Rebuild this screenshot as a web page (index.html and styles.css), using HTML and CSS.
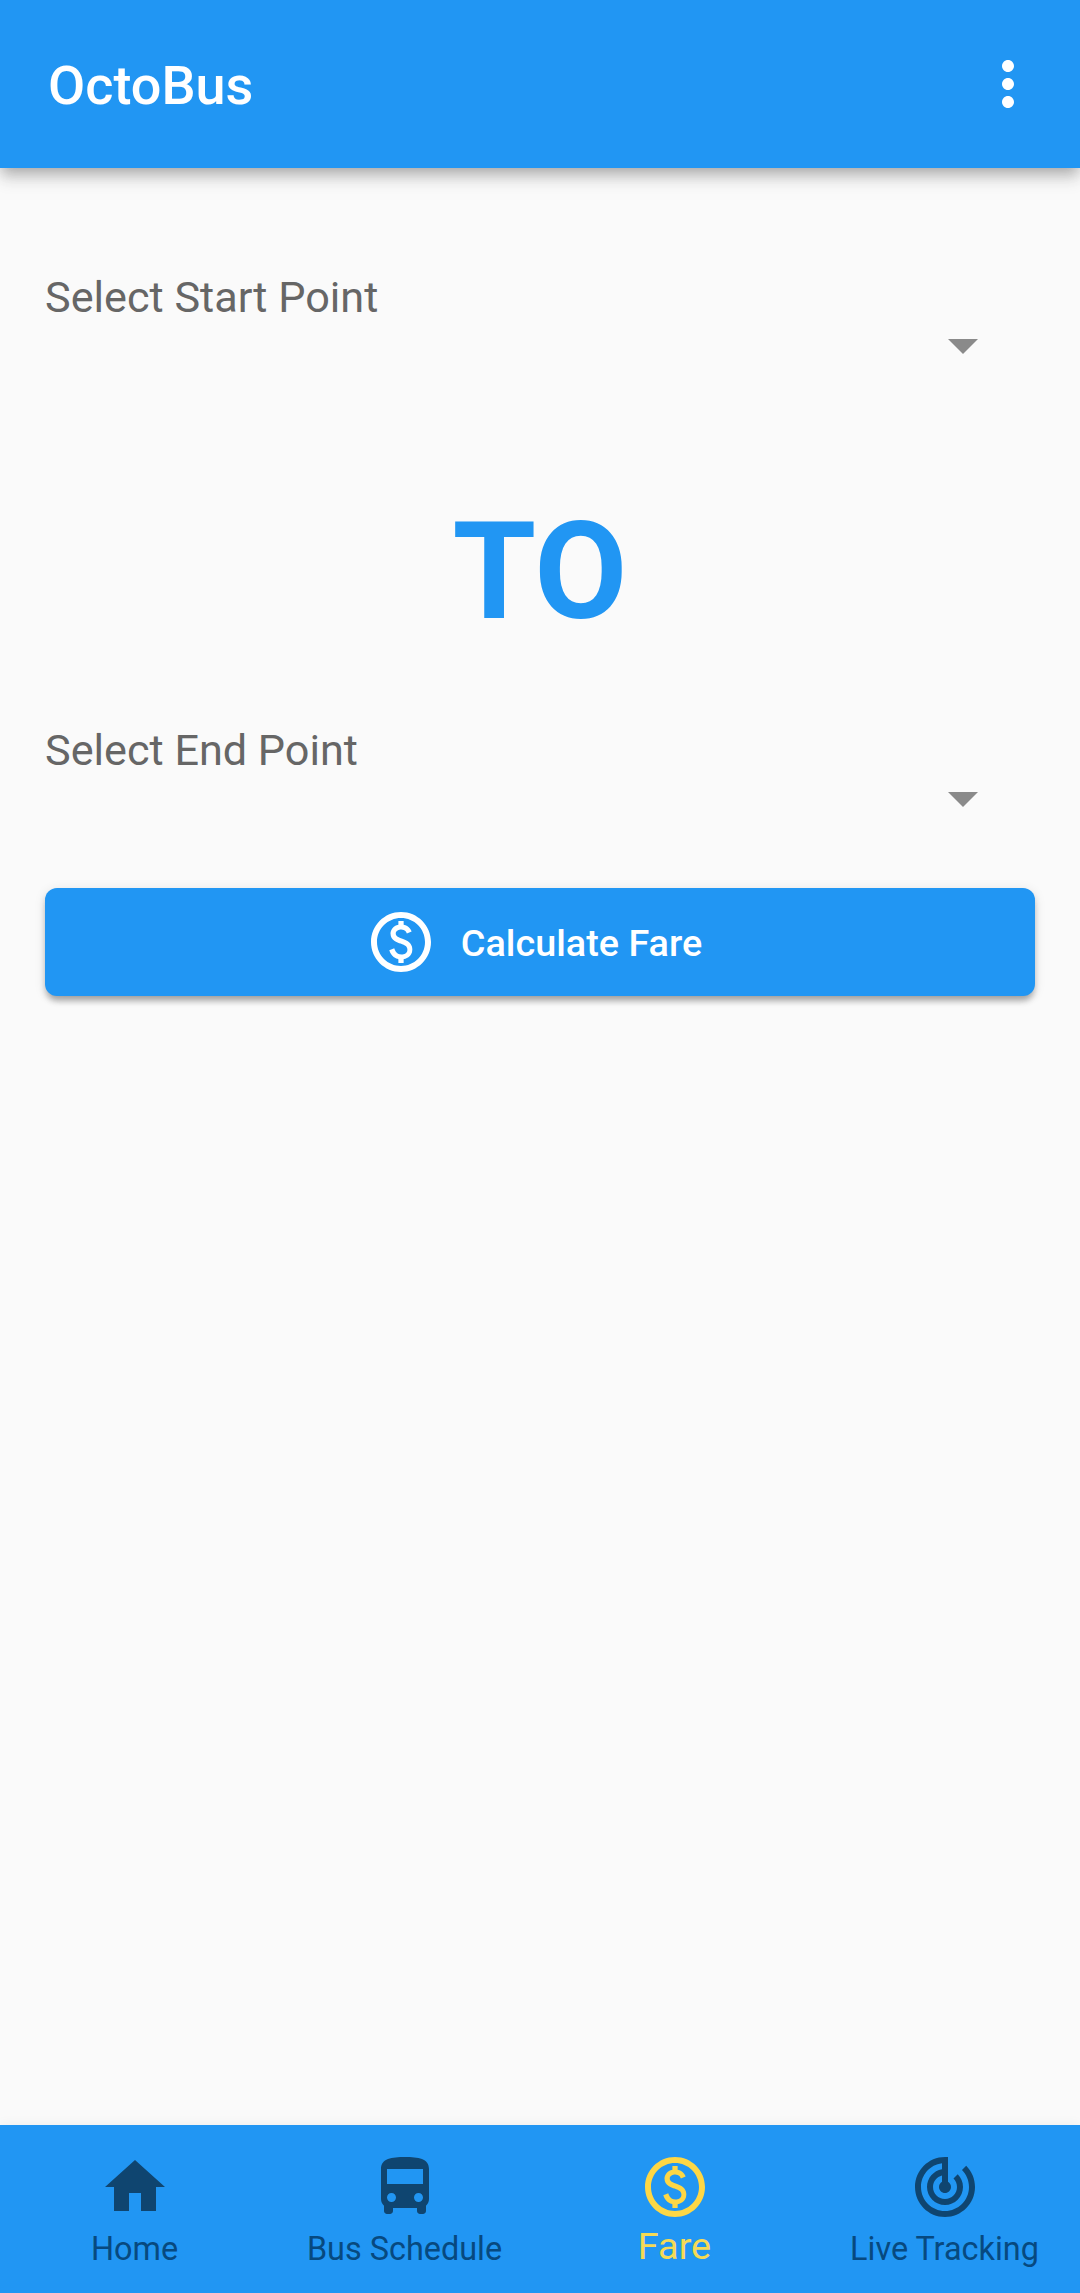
FILE: index.html
```html
<!DOCTYPE html>
<html lang="en">
<head>
  <meta charset="utf-8">
  <title>OctoBus</title>
  <link rel="stylesheet" href="styles.css">
</head>
<body>
  <header class="app-bar">
    <h1 class="app-title">OctoBus</h1>
    <svg class="icon" viewBox="0 0 24 24"><path d="M12 8c1.100 0 2-.9 2-2s-.9-2-2-2-2 .9-2 2 .9 2 2 2zm0 2c-1.100 0-2 .9-2 2s.9 2 2 2 2-.9 2-2-.9-2-2-2zm0 6c-1.100 0-2 .9-2 2s.9 2 2 2 2-.9 2-2-.9-2-2-2z"/></svg>
  </header>

  <main class="content">
    <div class="field">
      <span class="field-label">Select Start Point</span>
      <svg class="field-arrow" viewBox="7 10 10 5"><path d="M7 10l5 5 5-5z"/></svg>
    </div>
    <div class="separator">TO</div>
    <div class="field">
      <span class="field-label">Select End Point</span>
      <svg class="field-arrow" viewBox="7 10 10 5"><path d="M7 10l5 5 5-5z"/></svg>
    </div>
    <button class="fare-button" type="button">
      <svg class="icon" viewBox="0 0 24 24"><path d="M12 2C6.48 2 2 6.48 2 12s4.48 10 10 10 10-4.48 10-10S17.52 2 12 2zm0 18c-4.41 0-8-3.59-8-8s3.59-8 8-8 8 3.59 8 8-3.59 8-8 8z"/><path d="M12.89 11.1c-1.78-.59-2.64-.96-2.64-1.9 0-1.02 1.11-1.39 1.81-1.39 1.31 0 1.79.99 1.9 1.34l1.58-.67c-.15-.44-.82-1.91-2.66-2.23V5h-1.75v1.26c-2.6.56-2.62 2.85-2.62 2.96 0 2.27 2.25 2.91 3.35 3.31 1.58.56 2.28 1.07 2.28 2.03 0 1.13-1.05 1.61-1.98 1.61-1.82 0-2.34-1.87-2.4-2.09l-1.66.67c.63 2.19 2.28 2.78 3.03 2.96V19h1.75v-1.24c.4-.09 2.9-.59 2.9-3.22 0-1.39-.61-2.61-2.89-3.44z"/></svg>
      <span class="fare-button-label">Calculate Fare</span>
    </button>
  </main>

  <nav class="bottom-nav">
    <a class="nav-item">
      <svg class="icon" viewBox="0 0 24 24"><path d="M10 20v-6h4v6h5v-8h3L12 3 2 12h3v8z"/></svg>
      <span class="nav-label">Home</span>
    </a>
    <a class="nav-item">
      <svg class="icon" viewBox="0 0 24 24"><path d="M4 16c0 .88.39 1.67 1 2.22V20c0 .55.45 1 1 1h1c.55 0 1-.45 1-1v-1h8v1c0 .55.45 1 1 1h1c.55 0 1-.45 1-1v-1.78c.61-.55 1-1.34 1-2.22V6c0-3.500-3.580-4-8-4s-8 .5-8 4v10zm3.500 1c-.83 0-1.500-.67-1.500-1.500S6.670 14 7.500 14s1.500.67 1.500 1.500S8.330 17 7.500 17zm9 0c-.83 0-1.500-.67-1.500-1.500s.67-1.500 1.500-1.500 1.500.67 1.500 1.500-.67 1.500-1.500 1.500zm1.500-6H6V6h12v5z"/></svg>
      <span class="nav-label">Bus Schedule</span>
    </a>
    <a class="nav-item nav-item-active">
      <svg class="icon" viewBox="0 0 24 24"><path d="M12 2C6.48 2 2 6.48 2 12s4.48 10 10 10 10-4.48 10-10S17.52 2 12 2zm0 18c-4.41 0-8-3.59-8-8s3.59-8 8-8 8 3.59 8 8-3.59 8-8 8z"/><path d="M12.89 11.1c-1.78-.59-2.64-.96-2.64-1.9 0-1.02 1.11-1.39 1.81-1.39 1.31 0 1.79.99 1.9 1.34l1.58-.67c-.15-.44-.82-1.91-2.66-2.23V5h-1.75v1.26c-2.6.56-2.62 2.85-2.62 2.96 0 2.27 2.25 2.91 3.35 3.31 1.58.56 2.28 1.07 2.28 2.03 0 1.13-1.05 1.61-1.98 1.61-1.82 0-2.34-1.87-2.4-2.09l-1.66.67c.63 2.19 2.28 2.78 3.03 2.96V19h1.75v-1.24c.4-.09 2.9-.59 2.9-3.22 0-1.39-.61-2.61-2.89-3.44z"/></svg>
      <span class="nav-label">Fare</span>
    </a>
    <a class="nav-item">
      <svg class="icon" viewBox="0 0 24 24"><path d="M19.07 4.93l-1.41 1.41C19.1 7.79 20 9.79 20 12c0 4.42-3.58 8-8 8s-8-3.58-8-8c0-4.08 3.05-7.44 7-7.93v2.02C8.16 6.57 6 9.03 6 12c0 3.31 2.69 6 6 6s6-2.69 6-6c0-1.66-.67-3.16-1.76-4.24l-1.41 1.41C15.55 9.9 16 10.9 16 12c0 2.21-1.79 4-4 4s-4-1.79-4-4c0-1.86 1.28-3.41 3-3.86v2.14c-.6.35-1 .98-1 1.72 0 1.1.9 2 2 2s2-.9 2-2c0-.74-.4-1.38-1-1.72V2h-1C6.48 2 2 6.48 2 12s4.48 10 10 10 10-4.48 10-10c0-2.76-1.12-5.26-2.93-7.07z"/></svg>
      <span class="nav-label">Live Tracking</span>
    </a>
  </nav>
</body>
</html>
```
FILE: styles.css
```css
* {
  box-sizing: border-box;
}

body {
  display: flex;
  flex-direction: column;
  height: 2293px;
  margin: 0;
  background: #fafafa;
  font-family: Roboto, sans-serif;
}

.icon {
  flex: none;
  width: 72px;
  height: 72px;
  fill: currentColor;
}

.app-bar {
  display: flex;
  flex: none;
  align-items: center;
  justify-content: space-between;
  height: 168px;
  padding: 0 36px 0 48px;
  background: #2196f3;
  color: #fff;
  box-shadow: 0 6px 12px -3px rgba(0, 0, 0, 0.2), 0 12px 15px rgba(0, 0, 0, 0.12), 0 3px 20px rgba(0, 0, 0, 0.08);
}

.app-title {
  margin: 0;
  padding-top: 3px;
  font-size: 54px;
  font-weight: 500;
  line-height: 64px;
}

.content {
  display: flex;
  flex: 1;
  flex-direction: column;
  padding: 105px 45px 0;
}

.field {
  display: flex;
  flex-direction: column;
  gap: 16px;
  height: 81px;
}

.field-label {
  color: #666;
  font-size: 43.2px;
  line-height: 50px;
}

.field-arrow {
  align-self: flex-end;
  width: 30px;
  height: 15px;
  margin-right: 57px;
  fill: #8a8a8a;
}

.separator {
  margin: 139px 0 75px;
  color: #2196f3;
  font-size: 135px;
  font-weight: 700;
  line-height: 158px;
  text-align: center;
}

.fare-button {
  display: flex;
  align-items: center;
  justify-content: center;
  gap: 24px;
  height: 108px;
  margin-top: 81px;
  padding: 0 49px 0 36px;
  border: 0;
  border-radius: 12px;
  background: #2196f3;
  color: #fff;
  font: 500 37.8px/44px Roboto, sans-serif;
  box-shadow: 0 7px 6px -3px rgba(0, 0, 0, 0.2), 0 5px 6px rgba(0, 0, 0, 0.14), 0 2px 12px rgba(0, 0, 0, 0.1);
}

.fare-button-label {
  padding-top: 2px;
}

.bottom-nav {
  display: grid;
  flex: none;
  grid-template-columns: repeat(4, 1fr);
  height: 168px;
  background: #2196f3;
  box-shadow: 0 0 12px rgba(0, 0, 0, 0.06);
}

.nav-item {
  display: flex;
  flex-direction: column;
  align-items: center;
  padding-top: 26px;
  color: rgba(0, 0, 0, 0.54);
}

.nav-label {
  margin-top: 7px;
  padding-right: 1px;
  color: #07497f;
  font-size: 32.4px;
  line-height: 38px;
  white-space: nowrap;
}

.nav-item-active {
  color: #fdd745;
}

.nav-item-active .nav-label {
  margin-top: 1px;
  color: #f5da55;
  font-size: 37.8px;
  line-height: 44px;
}
```
